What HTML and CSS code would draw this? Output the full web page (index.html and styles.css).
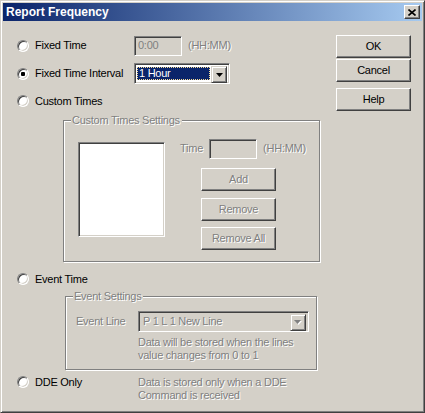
FILE: index.html
```html
<!DOCTYPE html>
<html>
<head>
<meta charset="utf-8">
<link rel="stylesheet" href="styles.css">
</head>
<body>
<div class="window">
  <div class="titlebar">
    <span class="title">Report Frequency</span>
    <span class="close"><svg width="8" height="7" viewBox="0 0 8 7"><path d="M0.5 0.5L7.5 6.5M7.5 0.5L0.5 6.5" stroke="#000" stroke-width="1.6" fill="none"/></svg></span>
  </div>
  <div class="client">
    <div class="main">
      <div class="opt row1">
        <span class="radio"></span>
        <span class="lbl">Fixed Time</span>
        <span class="edit dis-edit">0:00</span>
        <span class="dis hint">(HH:MM)</span>
      </div>
      <div class="opt row2">
        <span class="radio on"></span>
        <span class="lbl">Fixed Time Interval</span>
        <span class="combo">
          <span class="combo-val"><span class="sel">1 Hour</span></span>
          <span class="arrow"><svg width="7" height="4" viewBox="0 0 7 4"><polygon points="0,0 7,0 3.5,4" fill="#000"/></svg></span>
        </span>
      </div>
      <div class="opt row3">
        <span class="radio"></span>
        <span>Custom Times</span>
      </div>
      <div class="group g1">
        <span class="legend dis">Custom Times Settings</span>
        <div class="g1-body">
          <div class="listbox"></div>
          <div class="g1-right">
            <div class="time-row">
              <span class="dis">Time</span>
              <span class="edit dis-edit t-edit"></span>
              <span class="dis hint">(HH:MM)</span>
            </div>
            <span class="btn dis-btn b-add"><span class="dis">Add</span></span>
            <span class="btn dis-btn b-rem"><span class="dis">Remove</span></span>
            <span class="btn dis-btn b-all"><span class="dis">Remove All</span></span>
          </div>
        </div>
      </div>
      <div class="opt row4">
        <span class="radio"></span>
        <span>Event Time</span>
      </div>
      <div class="group g2">
        <span class="legend dis">Event Settings</span>
        <div class="ev-row">
          <span class="dis ev-lbl">Event Line</span>
          <span class="combo combo-dis">
            <span class="combo-val"><span class="dis">P 1 L 1 New Line</span></span>
            <span class="arrow"><svg width="8" height="5" viewBox="0 0 8 5"><polygon points="1,1 8,1 4.5,5" fill="#fff"/><polygon points="0,0 7,0 3.5,4" fill="#808080"/></svg></span>
          </span>
        </div>
        <div class="dis ev-note">Data will be stored when the lines<br>value changes from 0 to 1</div>
      </div>
      <div class="opt row5">
        <span class="radio"></span>
        <span class="lbl">DDE Only</span>
        <span class="dis dde-note">Data is stored only when a DDE<br>Command is received</span>
      </div>
    </div>
    <div class="side">
      <span class="btn b-ok">OK</span>
      <span class="btn b-cancel">Cancel</span>
      <span class="btn b-help">Help</span>
    </div>
  </div>
</div>
</body>
</html>
```
FILE: styles.css
```css
* { box-sizing: border-box; margin: 0; padding: 0; }
html, body { margin: 0; background: #D4D0C8; }
body {
  font-family: "Liberation Sans", Arial, sans-serif;
  font-size: 11px;
  letter-spacing: -0.25px;
  color: #000;
  line-height: 13px;
}
.window {
  width: 425px;
  height: 413px;
  border: 1px solid;
  border-color: #D4D0C8 #404040 #404040 #D4D0C8;
  box-shadow: inset 1px 1px #fff, inset -1px -1px #808080;
  padding: 2px;
  display: flex;
  flex-direction: column;
  background: #D4D0C8;
}
.titlebar {
  height: 18px;
  flex: none;
  background: linear-gradient(to right, #0A246A, #A6CAF0);
  display: flex;
  align-items: center;
  padding: 0 2px 0 3px;
}
.title {
  flex: 1;
  color: #fff;
  font-weight: bold;
  font-size: 12px;
  letter-spacing: 0;
}
.close {
  width: 16px;
  height: 14px;
  background: #D4D0C8;
  border: 1px solid;
  border-color: #fff #404040 #404040 #fff;
  box-shadow: inset -1px -1px #808080;
  display: flex;
  align-items: center;
  justify-content: center;
}
.close svg { display: block; }
.client { flex: 1; display: flex; }
.main {
  padding: 14px 0 0 14px;
  display: flex;
  flex-direction: column;
  align-items: flex-start;
}
.side {
  margin-left: auto;
  margin-right: 11px;
  padding-top: 14px;
  display: flex;
  flex-direction: column;
}
.opt { display: flex; align-items: center; }
.radio {
  flex: none;
  width: 12px;
  height: 12px;
  border-radius: 50%;
  border: 1px solid;
  border-color: #808080 #fff #fff #808080;
  background: #fff;
  box-shadow: inset 1px 1px #404040, inset -1px -1px #D4D0C8;
  margin-right: 6px;
  display: flex;
  align-items: center;
  justify-content: center;
}
.radio.on::after {
  content: "";
  width: 4px;
  height: 4px;
  border-radius: 1px;
  background: #000;
}
.lbl { width: 99px; flex: none; }
.dis { color: #808080; text-shadow: 1px 1px 0 #fff; }
.edit {
  height: 20px;
  width: 48px;
  border: 1px solid;
  border-color: #808080 #fff #fff #808080;
  box-shadow: inset 1px 1px #404040, inset -1px -1px #D4D0C8;
  background: #fff;
  display: flex;
  align-items: center;
  padding-left: 3px;
}
.dis-edit { background: #D4D0C8; color: #808080; }
.hint { margin-left: 6px; }
.row1 { height: 21px; }
.row2 { height: 21px; margin-top: 7px; }
.row3 { height: 16px; margin-top: 9px; }
.combo {
  width: 96px;
  height: 21px;
  border: 1px solid;
  border-color: #808080 #fff #fff #808080;
  box-shadow: inset 1px 1px #404040, inset -1px -1px #D4D0C8;
  background: #fff;
  padding: 2px;
  display: flex;
}
.combo-val {
  flex: 1;
  display: flex;
  padding: 1px 1px 1px 0;
}
.sel {
  flex: 1;
  background: #0A246A;
  color: #fff;
  border: 1px dotted #F5DB95;
  display: flex;
  align-items: center;
  padding-left: 1px;
}
.arrow {
  width: 16px;
  height: 17px;
  flex: none;
  background: #D4D0C8;
  border: 1px solid;
  border-color: #D4D0C8 #404040 #404040 #D4D0C8;
  box-shadow: inset 1px 1px #fff, inset -1px -1px #808080;
  display: flex;
  align-items: center;
  justify-content: center;
}
.arrow svg { display: block; }
.group {
  border: 1px solid #808080;
  box-shadow: inset 1px 1px #fff, 1px 1px 0 #fff;
  display: flex;
  flex-direction: column;
  align-items: flex-start;
}
.legend {
  background: #D4D0C8;
  margin: -7px 0 0 7px;
  padding: 0 2px 0 1px;
}
.g1 {
  margin: 11px 0 0 46px;
  width: 257px;
  height: 142px;
}
.g1-body { display: flex; align-items: flex-start; }
.listbox {
  width: 87px;
  height: 95px;
  margin: 15px 0 0 14px;
  border: 1px solid;
  border-color: #808080 #fff #fff #808080;
  box-shadow: inset 1px 1px #404040, inset -1px -1px #D4D0C8;
  background: #fff;
}
.g1-right {
  margin: 11px 0 0 15px;
  display: flex;
  flex-direction: column;
  align-items: flex-start;
}
.time-row { display: flex; align-items: center; height: 21px; }
.t-edit { margin-left: 6px; }
.btn {
  width: 75px;
  height: 23px;
  border: 1px solid;
  border-color: #fff #404040 #404040 #fff;
  box-shadow: inset -1px -1px #808080;
  background: #D4D0C8;
  display: flex;
  align-items: center;
  justify-content: center;
}
.b-add { margin: 9px 0 0 21px; }
.b-rem { margin: 7px 0 0 21px; }
.b-all { margin: 6px 0 0 21px; }
.b-cancel { margin-top: 1px; }
.b-help { margin-top: 6px; }
.row4 { height: 16px; margin-top: 9px; }
.g2 {
  margin: 9px 0 0 48px;
  width: 252px;
  height: 74px;
}
.ev-row {
  display: flex;
  align-items: center;
  margin: 8px 0 0 10px;
}
.ev-lbl { width: 62px; flex: none; }
.combo-dis .combo-val { background: #D4D0C8; align-items: center; padding-left: 2px; }
.combo-dis { width: 171px; background: #D4D0C8; }
.ev-note { margin: 4px 0 0 72px; }
.row5 { align-items: flex-start; margin-top: 6px; }
.dde-note { margin-left: 4px; }
```
